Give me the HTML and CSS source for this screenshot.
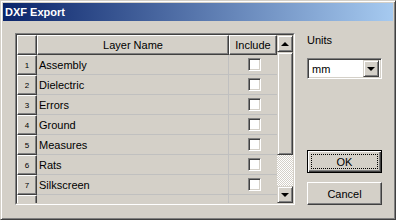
FILE: index.html
```html
<!DOCTYPE html>
<html lang="en">
<head>
    <meta charset="UTF-8">
    <title>DXF Export</title>
    <link rel="stylesheet" href="styles.css">
</head>
<body>

    <div class="window">
        <div class="titlebar"><span class="title">DXF Export</span></div>

        <div class="main">
            <div class="grid-frame">
                <div class="grid-inner">
                    <div class="grid">
                        <div class="head corner"></div>
                        <div class="head">Layer Name</div>
                        <div class="head">Include</div>

                        <div class="row-head">1</div><div class="cell name">Assembly</div><div class="cell check"><span class="checkbox"></span></div>
                        <div class="row-head">2</div><div class="cell name">Dielectric</div><div class="cell check"><span class="checkbox"></span></div>
                        <div class="row-head">3</div><div class="cell name">Errors</div><div class="cell check"><span class="checkbox"></span></div>
                        <div class="row-head">4</div><div class="cell name">Ground</div><div class="cell check"><span class="checkbox"></span></div>
                        <div class="row-head">5</div><div class="cell name">Measures</div><div class="cell check"><span class="checkbox"></span></div>
                        <div class="row-head">6</div><div class="cell name">Rats</div><div class="cell check"><span class="checkbox"></span></div>
                        <div class="row-head">7</div><div class="cell name">Silkscreen</div><div class="cell check"><span class="checkbox"></span></div>
                        <div class="row-head">8</div><div class="cell name"></div><div class="cell check"></div>
                    </div>

                    <div class="scrollbar">
                        <div class="scroll-btn"><span class="arrow-up"></span></div>
                        <div class="thumb"></div>
                        <div class="track"></div>
                        <div class="scroll-btn"><span class="arrow-down"></span></div>
                    </div>
                </div>
            </div>

            <div class="side">
                <div class="label">Units</div>
                <div class="combo">
                    <span class="combo-text">mm</span>
                    <span class="combo-btn"><span class="arrow-down"></span></span>
                </div>
                <div class="buttons">
                    <button class="btn default"><span class="focus">OK</span></button>
                    <button class="btn">Cancel</button>
                </div>
            </div>
        </div>
    </div>

</body>
</html>
```

FILE: styles.css
```css
* {
    margin: 0;
    padding: 0;
    box-sizing: border-box;
    font-family: 'Liberation Sans', Arial, sans-serif;
}

body {
    background: #d4d0c8;
}

.window {
    width: 396px;
    height: 220px;
    background: #d4d0c8;
    border: 1px solid;
    border-color: #d4d0c8 #404040 #404040 #d4d0c8;
    box-shadow: inset 1px 1px #fff, inset -1px -1px #808080;
    padding: 2px;
    font-size: 11px;
    color: #000;
}

.titlebar {
    height: 18px;
    background: linear-gradient(to right, #0a246a, #a6caf0);
    display: flex;
    align-items: center;
    padding-left: 2px;
}

.title {
    color: #fff;
    font-weight: bold;
    font-size: 11px;
}

.main {
    display: flex;
    gap: 12px;
    padding: 12px 0 0 12px;
}

/* sunken 2px frame around the grid */
.grid-frame {
    border: 1px solid;
    border-color: #808080 #fff #fff #808080;
}

.grid-inner {
    display: flex;
    border: 1px solid;
    border-color: #404040 #d4d0c8 #d4d0c8 #404040;
    height: 170px;
}

.grid {
    display: grid;
    grid-template-columns: 20px 192px 48px;
    grid-auto-rows: 20px;
    width: 260px;
    height: 168px;
    overflow: hidden;
}

.head,
.row-head {
    background: #d4d0c8;
    border: 1px solid;
    border-color: #fff #404040 #404040 #fff;
    box-shadow: inset -1px -1px #808080;
    display: flex;
    align-items: center;
    justify-content: center;
}

.row-head {
    font-size: 8px;
}

.cell {
    border-bottom: 1px solid #c0c0c0;
    display: flex;
    align-items: center;
}

.name {
    border-right: 1px solid #c0c0c0;
    padding-left: 2px;
}

.check {
    justify-content: center;
}

.checkbox {
    width: 13px;
    height: 13px;
    background: #fff;
    border: 1px solid;
    border-color: #808080 #fff #fff #808080;
    box-shadow: inset 1px 1px #404040, inset -1px -1px #d4d0c8;
    margin-left: 2px;
}

.scrollbar {
    width: 16px;
    display: flex;
    flex-direction: column;
}

.scroll-btn,
.thumb,
.combo-btn {
    background: #d4d0c8;
    border: 1px solid;
    border-color: #d4d0c8 #404040 #404040 #d4d0c8;
    box-shadow: inset 1px 1px #fff, inset -1px -1px #808080;
}

.scroll-btn {
    height: 17px;
    display: flex;
    align-items: center;
    justify-content: center;
}

.thumb {
    height: 103px;
}

.track {
    flex: 1;
    background: repeating-conic-gradient(#fff 0 25%, #d4d0c8 0 50%) 0 0 / 2px 2px;
}

.arrow-up {
    width: 0;
    height: 0;
    border-left: 4px solid transparent;
    border-right: 4px solid transparent;
    border-bottom: 4px solid #000;
}

.arrow-down {
    width: 0;
    height: 0;
    border-left: 4px solid transparent;
    border-right: 4px solid transparent;
    border-top: 4px solid #000;
}

.side {
    width: 75px;
    display: flex;
    flex-direction: column;
}

.label {
    margin-top: 1px;
    line-height: 13px;
}

.combo {
    margin-top: 11px;
    height: 21px;
    background: #fff;
    border: 1px solid;
    border-color: #808080 #fff #fff #808080;
    box-shadow: inset 1px 1px #404040, inset -1px -1px #d4d0c8;
    padding: 2px;
    display: flex;
    align-items: center;
}

.combo-text {
    flex: 1;
    padding-left: 2px;
}

.combo-btn {
    width: 16px;
    height: 17px;
    display: flex;
    align-items: center;
    justify-content: center;
}

.buttons {
    margin-top: auto;
    display: flex;
    flex-direction: column;
    gap: 9px;
}

.btn {
    height: 23px;
    background: #d4d0c8;
    border: 1px solid;
    border-color: #fff #404040 #404040 #fff;
    box-shadow: inset -1px -1px #808080;
    font-size: 11px;
    color: #000;
    display: flex;
    align-items: center;
    justify-content: center;
}

.btn.default {
    border: 1px solid #000;
    box-shadow: inset 1px 1px #fff, inset -1px -1px #404040, inset -2px -2px #808080;
    padding: 3px;
}

.focus {
    width: 100%;
    height: 100%;
    border: 1px dotted #000;
    display: flex;
    align-items: center;
    justify-content: center;
}
```
